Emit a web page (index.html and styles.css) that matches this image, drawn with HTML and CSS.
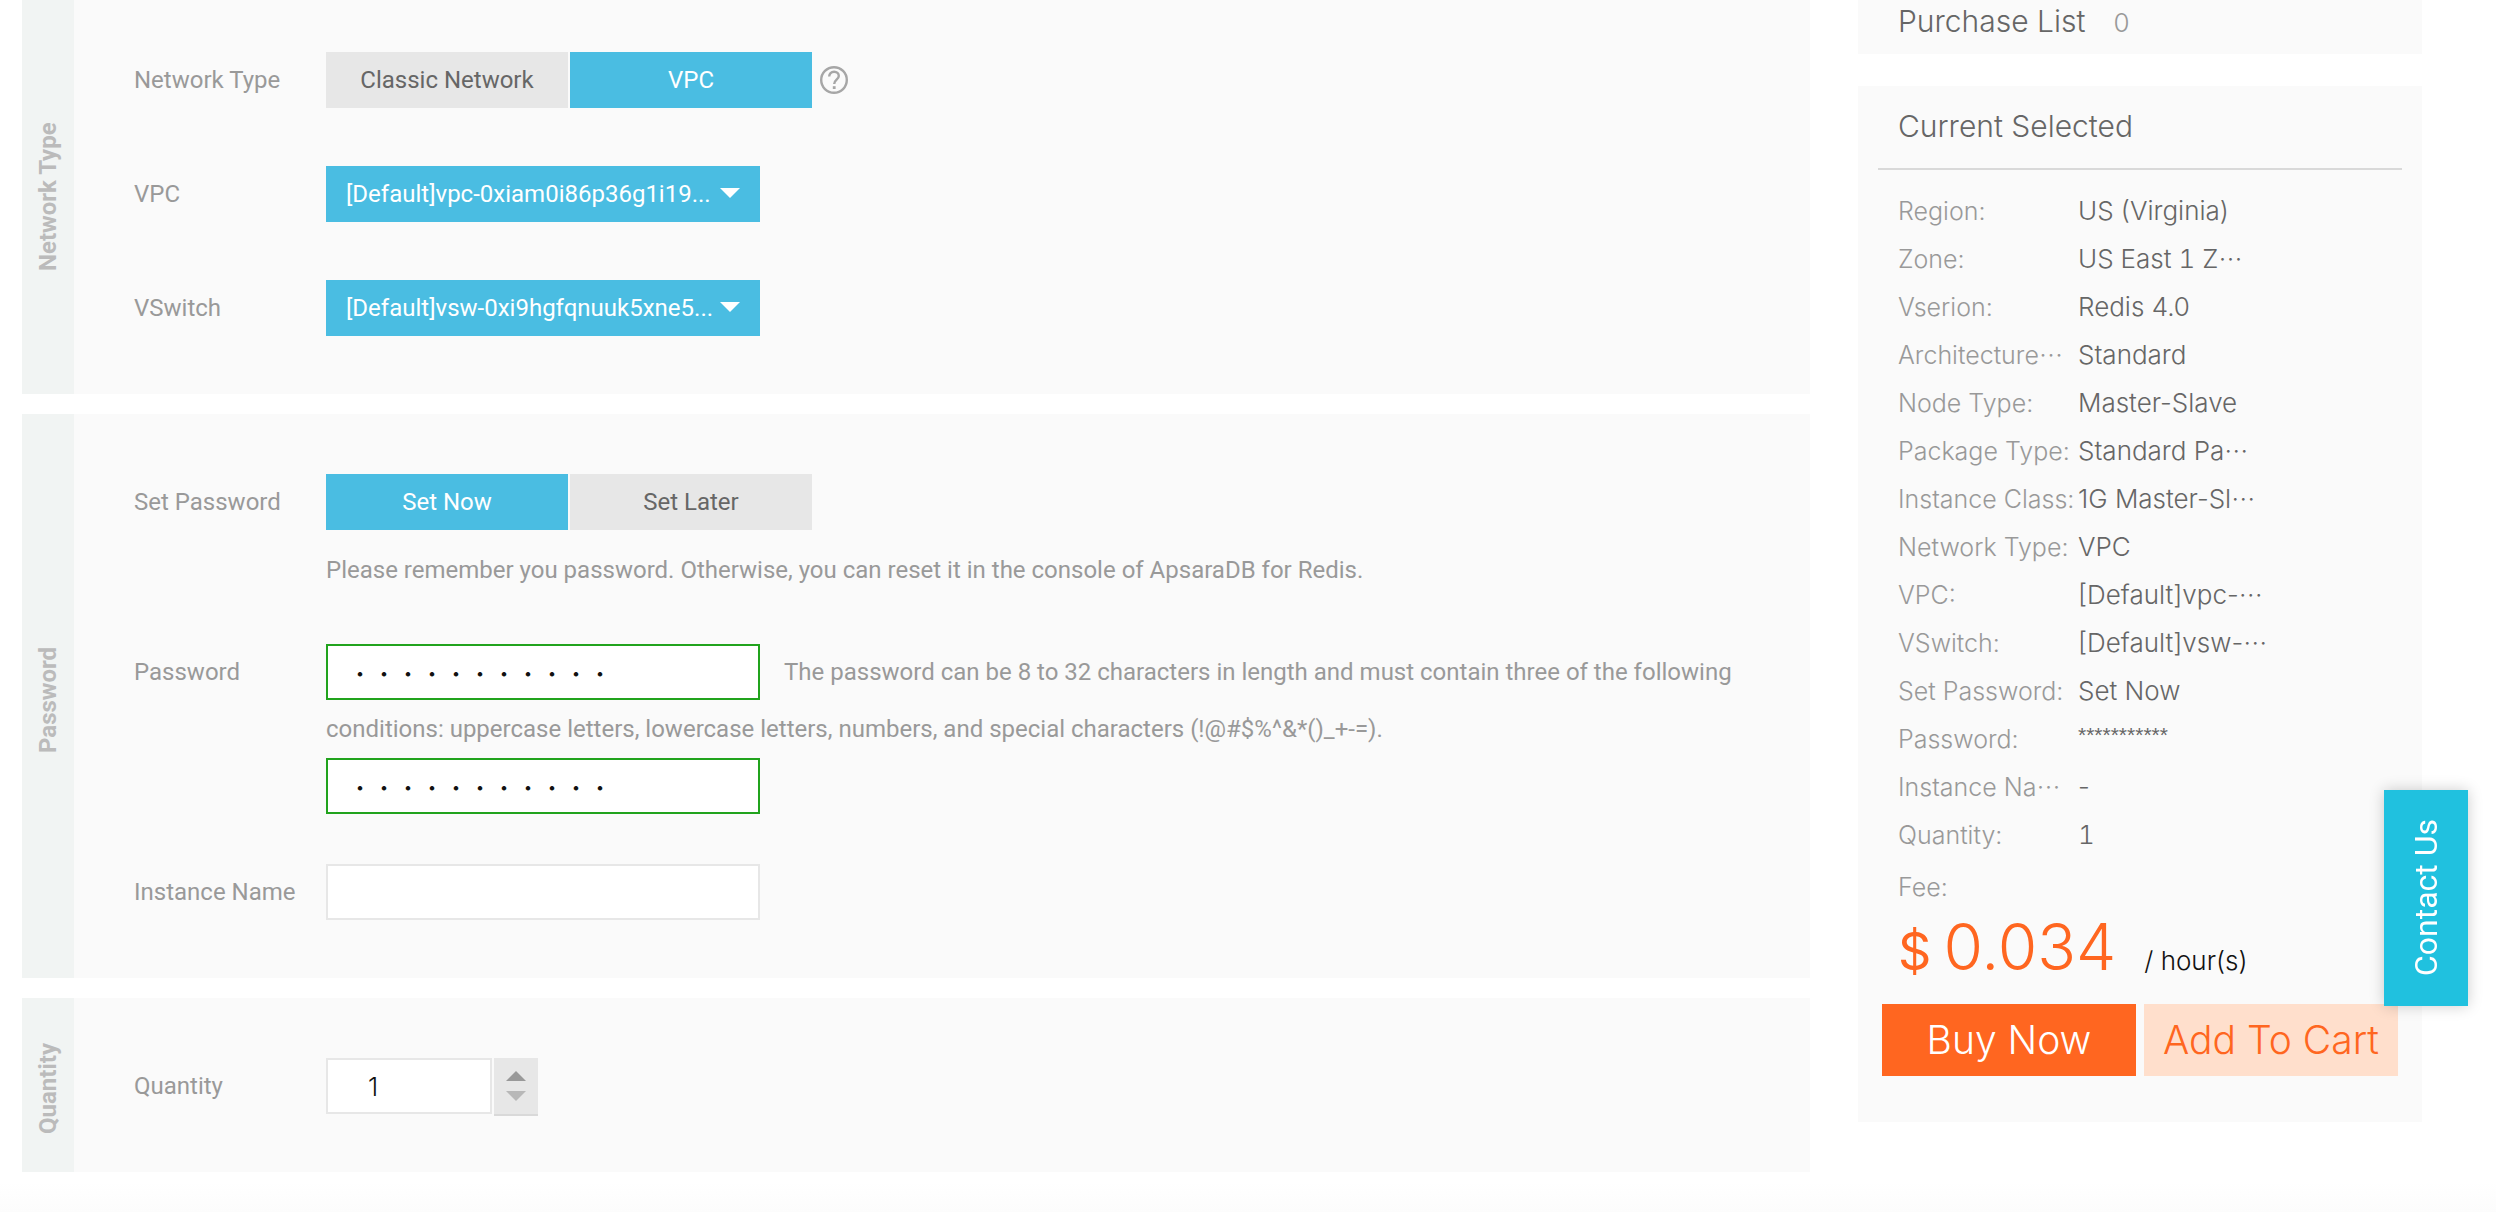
FILE: index.html
```html
<!DOCTYPE html>
<html lang="en">
<head>
<meta charset="utf-8">
<title>ApsaraDB for Redis</title>
<link rel="stylesheet" href="styles.css">
</head>
<body>
<div class="page">
  <main class="config">
    <section class="group group-first">
      <h2 class="group-name">Network Type</h2>
      <div class="group-body">
        <div class="row">
          <span class="row-label" id="net-label">Network Type</span>
          <div class="options" role="group" aria-labelledby="net-label">
            <button type="button" class="option">Classic Network</button>
            <button type="button" class="option option-on">VPC</button>
            <svg class="help" viewBox="0 0 28 28" aria-hidden="true">
              <circle cx="14" cy="14" r="12.8" fill="none" stroke="#a6a6a6" stroke-width="2.4"/>
              <path d="M9.2 10.6c0-3 2-4.9 4.9-4.9 2.8 0 4.7 1.8 4.7 4.2 0 3.6-4.6 4-4.6 8" fill="none" stroke="#a6a6a6" stroke-width="2.4"/>
              <rect x="12.8" y="20.2" width="2.8" height="2.8" fill="#a6a6a6"/>
            </svg>
          </div>
        </div>
        <div class="row">
          <label class="row-label" for="vpc">VPC</label>
          <div class="picker"><select id="vpc"><option>[Default]vpc-0xiam0i86p36g1i19...</option></select></div>
        </div>
        <div class="row">
          <label class="row-label" for="vswitch">VSwitch</label>
          <div class="picker"><select id="vswitch"><option>[Default]vsw-0xi9hgfqnuuk5xne5...</option></select></div>
        </div>
      </div>
    </section>

    <section class="group">
      <h2 class="group-name">Password</h2>
      <div class="group-body">
        <div class="row">
          <span class="row-label" id="set-label">Set Password</span>
          <div>
            <div class="options" role="group" aria-labelledby="set-label">
              <button type="button" class="option option-on">Set Now</button>
              <button type="button" class="option">Set Later</button>
            </div>
            <p class="note">Please remember you password. Otherwise, you can reset it in the console of ApsaraDB for Redis.</p>
          </div>
        </div>
        <div class="row row-password">
          <label class="row-label" for="pwd">Password</label>
          <div>
            <input class="field field-valid field-float" id="pwd" type="password" value="Redis-12345">
            <p class="hint">The password can be 8 to 32 characters in length and must contain three of the following conditions: uppercase letters, lowercase letters, numbers, and special characters (!@#$%^&amp;*()_+-=).</p>
            <input class="field field-valid" type="password" value="Redis-12345" aria-label="Confirm password">
          </div>
        </div>
        <div class="row">
          <label class="row-label" for="iname">Instance Name</label>
          <input class="field" id="iname" type="text">
        </div>
      </div>
    </section>

    <section class="group">
      <h2 class="group-name">Quantity</h2>
      <div class="group-body">
        <div class="row">
          <label class="row-label" for="qty">Quantity</label>
          <div class="quantity">
            <input class="field field-qty" id="qty" type="text" value="1">
            <div class="stepper">
              <button type="button" class="step" aria-label="Increase"><svg viewBox="0 0 20 10"><path d="M10 0 20 10H0z" fill="#999"/></svg></button>
              <button type="button" class="step" aria-label="Decrease"><svg viewBox="0 0 20 10"><path d="M0 0H20L10 10z" fill="#b8b8b8"/></svg></button>
            </div>
          </div>
        </div>
      </div>
    </section>
  </main>

  <aside class="side">
    <section class="card purchase">
      <h2 class="card-title">Purchase List</h2>
      <span class="purchase-count">0</span>
    </section>
    <section class="card">
      <header class="card-head"><h2 class="card-title">Current Selected</h2></header>
      <dl class="summary">
        <dt>Region:</dt><dd>US (Virginia)</dd>
        <dt>Zone:</dt><dd class="numbered">US East 1 Z<span class="more" lang="ja">⋯</span></dd>
        <dt>Vserion:</dt><dd>Redis 4.0</dd>
        <dt>Architecture<span class="more" lang="ja">⋯</span></dt><dd>Standard</dd>
        <dt>Node Type:</dt><dd>Master-Slave</dd>
        <dt>Package Type:</dt><dd>Standard Pa<span class="more" lang="ja">⋯</span></dd>
        <dt>Instance Class:</dt><dd>1G Master-Sl<span class="more" lang="ja">⋯</span></dd>
        <dt>Network Type:</dt><dd>VPC</dd>
        <dt>VPC:</dt><dd>[Default]vpc-<span class="more" lang="ja">⋯</span></dd>
        <dt>VSwitch:</dt><dd>[Default]vsw-<span class="more" lang="ja">⋯</span></dd>
        <dt>Set Password:</dt><dd>Set Now</dd>
        <dt>Password:</dt><dd class="masked">***********</dd>
        <dt>Instance Na<span class="more" lang="ja">⋯</span></dt><dd>-</dd>
        <dt>Quantity:</dt><dd class="numbered">1</dd>
      </dl>
      <p class="fee">Fee:</p>
      <p class="price"><span class="currency">$</span><span class="amount">0.034</span><span class="unit">/ hour(s)</span></p>
      <div class="actions">
        <button type="button" class="buy">Buy Now</button>
        <button type="button" class="cart">Add To Cart</button>
      </div>
    </section>
  </aside>
</div>
<footer class="page-end"></footer>
<a class="contact" href="#contact"><span>Contact Us</span></a>
</body>
</html>
```
FILE: styles.css
```css
* { box-sizing: border-box; }

body {
  margin: 0;
  background: #fff;
  color: #999;
  font: 24px/32px Roboto, "Liberation Sans", sans-serif;
}

h2, p, dl, dd { margin: 0; }
button, input, select { margin: 0; border: 0; border-radius: 0; font: inherit; }
button, select { cursor: pointer; }

.page {
  display: grid;
  grid-template-columns: minmax(0, 1fr) 564px;
  gap: 48px;
  align-items: start;
  padding: 0 74px 0 22px;
}

/* configuration groups */
.config { display: grid; gap: 20px; }
.group { display: flex; background: #fafafa; }
.group-name {
  flex: none;
  width: 52px;
  padding-bottom: 8px;
  background: #f1f4f3;
  color: #bbb;
  font-size: 24px;
  font-weight: 700;
  line-height: 52px;
  text-align: center;
  writing-mode: vertical-rl;
  transform: rotate(180deg);
}
.group-first .group-name { padding-bottom: 0; }
.group-body { flex: 1; display: grid; gap: 58px; padding: 60px 60px 58px; }
.group-first .group-body { padding-top: 52px; }
.row { display: grid; grid-template-columns: 192px minmax(0, 1fr); align-items: start; }
.row-label { line-height: 56px; white-space: nowrap; }
.row-password { margin-bottom: -8px; }

.options { display: flex; gap: 2px; align-items: center; }
.option { width: 242px; height: 56px; padding: 0; background: #e7e7e7; color: #666; }
.option-on { background: #4abde2; color: #fff; }
.help { width: 28px; height: 28px; margin-left: 6px; }

.picker { position: relative; width: 434px; }
.picker select {
  display: block;
  width: 100%;
  height: 56px;
  padding: 0 20px;
  appearance: none;
  background: #4abde2;
  color: #fff;
}
.picker::after {
  content: "";
  position: absolute;
  top: 22px;
  right: 20px;
  border: 10px solid transparent;
  border-top-color: #fff;
  border-bottom: 0;
  pointer-events: none;
}

.note { margin-top: 24px; }
.hint { line-height: 57px; }

.field {
  display: block;
  width: 434px;
  height: 56px;
  padding: 0 20px;
  border: 2px solid #e7e7e7;
  background: #fff;
  color: #111;
}
.field-valid { border-color: #21a31d; font-family: "Noto Sans CJK SC", sans-serif; font-weight: 300; }
.field-float { float: left; margin-right: 24px; }

.quantity { display: flex; gap: 2px; height: 56px; }
.field-qty { width: 166px; padding: 0 40px; font: 300 26px Inter, sans-serif; }
.stepper {
  display: grid;
  gap: 10px;
  align-content: center;
  width: 44px;
  height: 58px;
  border-bottom: 2px solid #d9d9d9;
  background: #e7e7e7;
}
.step { height: 10px; padding: 0; background: none; display: flex; justify-content: center; }
.step svg { width: 20px; height: 10px; }

/* order summary */
.side { display: grid; gap: 32px; font-family: Inter, "Noto Sans CJK SC", sans-serif; font-weight: 300; }
.card { background: #fafafa; }
.card-title { color: #666; font-size: 30px; font-weight: 300; white-space: nowrap; }
.purchase { display: flex; gap: 28px; height: 54px; padding: 5px 40px; }
.purchase-count { font-size: 26px; line-height: 36px; }
.card-head { margin: 0 20px; padding: 24px 20px 26px; border-bottom: 2px solid #d9d9d9; }

.summary {
  display: grid;
  grid-template-columns: 180px minmax(0, 1fr);
  padding: 17px 40px 4px;
  line-height: 48px;
  white-space: nowrap;
}
.summary dt { height: 48px; font-size: 25px; }
.summary dd { height: 48px; color: #666; font-size: 26px; }
.summary .numbered { font-variant-numeric: tabular-nums; }
.summary .masked { font: 400 21px/40px "Liberation Sans", sans-serif; }
.more { font-family: "Noto Sans CJK JP", sans-serif; font-size: 24px; line-height: 1; }

.fee { padding-left: 40px; font-size: 25px; line-height: 48px; }
.price { display: flex; align-items: baseline; height: 93px; padding-left: 40px; color: #ff6620; line-height: 72px; }
.currency { font-size: 52px; font-weight: 400; }
.amount { margin-left: 12px; font-size: 64px; }
.unit { margin-left: 28px; color: #111; font-size: 26px; }

.actions { display: flex; gap: 8px; padding: 0 24px 46px; }
.actions button { flex: 1; height: 72px; padding: 0; font-size: 39px; font-weight: 300; white-space: nowrap; }
.buy { background: #ff6620; color: #fff; }
.cart { background: #ffdfcc; color: #ff6620; }

.page-end { height: 40px; background: linear-gradient(#fff 10px, #fcfcfc); }

.contact {
  position: fixed;
  right: 28px;
  bottom: 206px;
  display: flex;
  align-items: center;
  justify-content: center;
  width: 84px;
  height: 216px;
  background: #20c1df;
  box-shadow: 0 0 14px rgba(0, 0, 0, .2);
  color: #fff;
  font-size: 32px;
  text-decoration: none;
}
.contact span { writing-mode: vertical-rl; transform: rotate(180deg); white-space: nowrap; }
```
